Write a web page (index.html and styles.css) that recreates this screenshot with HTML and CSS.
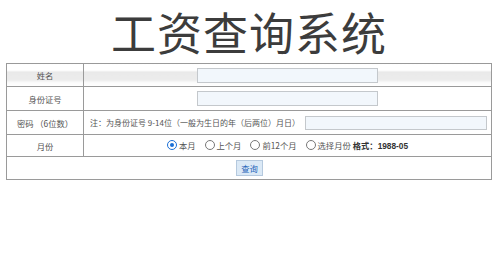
FILE: index.html
```html
<!DOCTYPE html>
<html lang="zh-CN">
<head>
<meta charset="utf-8">
<title>工资查询系统</title>
<link rel="stylesheet" href="styles.css">
</head>
<body>
<h1 class="title">工资查询系统</h1>
<table class="form">
  <colgroup><col class="col-label"><col class="col-field"></colgroup>
  <tr class="row row-head">
    <td class="label">姓名</td>
    <td class="field center"><input class="txt" type="text"></td>
  </tr>
  <tr class="row">
    <td class="label">身份证号</td>
    <td class="field center"><input class="txt" type="text"></td>
  </tr>
  <tr class="row">
    <td class="label">密码 （6位数）</td>
    <td class="field note"><span class="note-text">注：为身份证号 9-14位（一般为生日的年（后两位）月日）</span><input class="txt txt-wide" type="password"></td>
  </tr>
  <tr class="row row-month">
    <td class="label">月份</td>
    <td class="field center">
      <span class="radios">
        <label class="opt"><span class="radio on"></span>本月</label>
        <label class="opt"><span class="radio"></span>上个月</label>
        <label class="opt"><span class="radio"></span>前12个月</label>
        <label class="opt"><span class="radio"></span>选择月份</label>
        <b class="fmt">格式：1988-05</b>
      </span>
    </td>
  </tr>
  <tr class="row row-btn">
    <td class="btn-cell" colspan="2"><button class="btn" type="button">查询</button></td>
  </tr>
</table>
</body>
</html>
```
FILE: styles.css
```css
html, body {
  margin: 0;
  padding: 0;
  background: #fff;
}
body {
  font-family: "Noto Sans CJK SC", "Noto Sans", sans-serif;
  font-size: 8.3px;
  color: #444;
}
.title {
  margin: 0;
  height: 63px;
  display: flex;
  align-items: center;
  justify-content: center;
  font-size: 45px;
  font-weight: normal;
  color: #3c3c3c;
  letter-spacing: 1px;
}
.form {
  margin: 0 0 0 6px;
  width: 486px;
  table-layout: fixed;
  border-collapse: collapse;
  border: 1px solid #8a8a8a;
}
.col-label {
  width: 77px;
}
.form td {
  border: 1px solid #9a9a9a;
  padding: 0;
  height: 24px;
  box-sizing: border-box;
  white-space: nowrap;
}
.row-head td {
  height: 23px;
  background: linear-gradient(#fff 0, #fff 28%, #e9e9e9 32%, #ececec 72%, #fafafa 80%, #fff 100%);
}
.label {
  text-align: center;
  color: #555;
}
.center {
  text-align: center;
}
.note {
  padding-left: 6px !important;
  color: #555;
}
.note-text {
  font-size: 8px;
  vertical-align: middle;
}
.txt {
  width: 181px;
  height: 15px;
  box-sizing: border-box;
  border: 1px solid #c4c8cc;
  background: #f2f7fc;
  vertical-align: middle;
  padding: 0;
  margin: 0;
}
.txt-wide {
  width: 182px;
  height: 14px;
  margin-left: 5px;
}
.row-month td {
  height: 22px;
}
.row-btn td {
  height: 23px;
}
.radios {
  display: inline-flex;
  align-items: center;
  color: #555;
}
.opt {
  display: inline-flex;
  align-items: center;
  margin-right: 9px;
}
.radio {
  width: 10px;
  height: 10px;
  border: 1px solid #777;
  border-radius: 50%;
  box-sizing: border-box;
  margin-right: 2px;
  position: relative;
  background: #fff;
}
.radio.on {
  border-color: #1a6fd6;
}
.radio.on::after {
  content: "";
  position: absolute;
  left: 2px;
  top: 2px;
  width: 4px;
  height: 4px;
  border-radius: 50%;
  background: #1a6fd6;
}
.fmt {
  margin-left: -7px;
  font-weight: bold;
  color: #333;
  font-family: "Liberation Sans", "Noto Sans CJK SC", sans-serif;
}
.btn-cell {
  text-align: center;
}
.btn {
  font-family: "Noto Sans CJK SC", sans-serif;
  font-size: 8.3px;
  color: #1d63b8;
  background: #dbe9f6;
  border: 1px solid #b5c9de;
  height: 16px;
  width: 27px;
  padding: 0;
  line-height: 14px;
  margin-left: 1px;
}
```
